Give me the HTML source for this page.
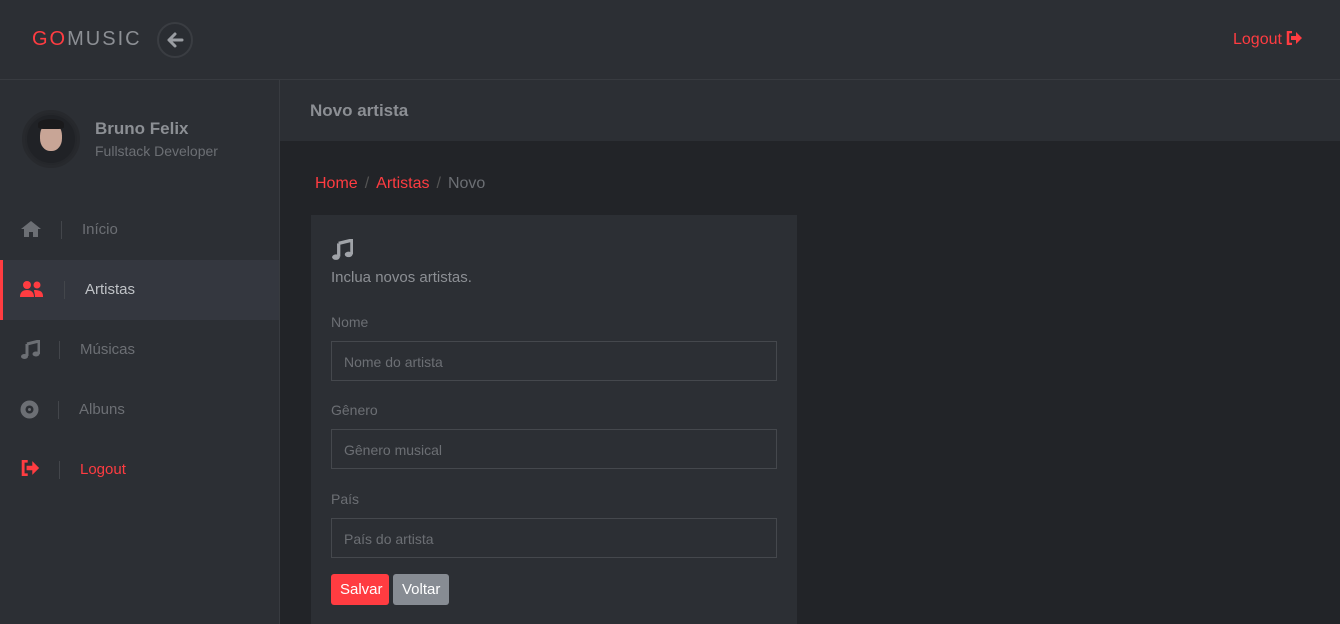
<!DOCTYPE html>
<html><head><meta charset="utf-8"><style>
*{box-sizing:border-box;margin:0;padding:0}
html,body{width:1340px;height:624px;overflow:hidden}
body{background:#222428;font-family:"Liberation Sans",sans-serif;position:relative}
.hdr{position:absolute;left:0;top:0;width:1340px;height:80px;background:#2c2f34;border-bottom:1px solid #383b40}
.logo{position:absolute;left:32px;top:28px;font-size:20px;letter-spacing:2px;color:#8c8f94}
.logo b{color:#ff3c41;font-weight:normal}
.back{position:absolute;left:157px;top:22px;width:36px;height:36px;border-radius:50%;border:2px solid #3a3d42;background:#2a2d32}
.hlog{position:absolute;left:1233px;top:31px;font-size:16px;color:#ff3c41}
.side{position:absolute;left:0;top:80px;width:280px;height:544px;background:#2c2f34;border-right:1px solid #383b40}
.av{position:absolute;left:22px;top:30px;width:58px;height:58px;border-radius:50%;background:#25272b;overflow:hidden;border:3px solid #27292d}
.av i{position:absolute;left:2px;top:2px;width:48px;height:48px;border-radius:50%;background:#202226;overflow:hidden}
.av i:before{content:"";position:absolute;left:13px;top:8px;width:22px;height:28px;border-radius:45%;background:#c8a596}
.av i:after{content:"";position:absolute;left:11px;top:4px;width:26px;height:10px;border-radius:50% 50% 20% 20%;background:#1a1a1c}
.nm{position:absolute;left:95px;top:39px;font-size:17px;font-weight:bold;color:#8c8f94}
.rl{position:absolute;left:95px;top:63px;font-size:14px;color:#6c6f74}
.it{position:absolute;left:0;width:279px;height:60px}
.it.act{background:#34373f;border-left:3px solid #ff3c41}
.it svg{position:absolute;left:20px;top:20px}
.it .sep{position:absolute;top:21px;width:1px;height:18px;background:#43464b}
.it span{position:absolute;top:21px;font-size:15px;color:#6c6f74}
.tbar{position:absolute;left:280px;top:80px;width:1060px;height:61px;background:#2c2f34}
.tbar span{position:absolute;left:30px;top:21px;font-size:17px;font-weight:bold;color:#8c8f94}
.bc{position:absolute;left:315px;top:175px;font-size:16px;color:#6c6f74}
.bc a{color:#ff3c41;text-decoration:none}
.bc i{font-style:normal;color:#555;margin:0 7px}
.card{position:absolute;left:311px;top:215px;width:486px;height:409px;background:#2c2f34}
.card .ds{position:absolute;left:20px;top:54px;font-size:15px;color:#8c8f94}
.lb{position:absolute;left:20px;font-size:14px;color:#6c6f74}
.in{position:absolute;left:20px;width:446px;height:40px;border:1px solid #45484d;font-size:14px;color:#6c6f74;padding:12px 12px}
.btn{position:absolute;top:359px;height:31px;border-radius:3px;color:#fff;font-size:15px;padding:7px 9px}
</style></head><body>
<div class="hdr">
<div class="logo"><b>GO</b>MUSIC</div>
<div class="back"><svg width="32" height="32" viewBox="0 0 32 32"><path d="M23 16H10M16 10l-6 6 6 6" stroke="#9a9da2" stroke-width="3" fill="none" stroke-linecap="round" stroke-linejoin="round"/></svg></div>
<div class="hlog">Logout <svg width="16" height="14" viewBox="0 0 16 14" style="vertical-align:-1px"><path d="M6 1H2v12h4" stroke="#ff3c41" stroke-width="2.5" fill="none"/><path d="M5 5h5V1l6 6-6 6V9H5z" fill="#ff3c41"/></svg></div>
</div>
<div class="side">
<div class="av"><i></i></div>
<div class="nm">Bruno Felix</div>
<div class="rl">Fullstack Developer</div>
<div class="it" style="top:120px"><svg width="22" height="18" viewBox="0 0 22 18"><path d="M11 1L1 9h3v8h5v-5h4v5h5V9h3z" fill="#6c6f74"/></svg><div class="sep" style="left:61px"></div><span style="left:82px">Início</span></div>
<div class="it act" style="top:180px"><svg width="24" height="18" viewBox="0 0 24 18" style="left:17px"><circle cx="7" cy="5" r="4" fill="#ff3c41"/><circle cx="17" cy="5" r="3.5" fill="#ff3c41"/><path d="M0 17c0-5 3-7 7-7s7 2 7 7z M14 10c5 0 9 1 9 6v1h-8c0-3-1-5-1-7z" fill="#ff3c41"/></svg><div class="sep" style="left:61px"></div><span style="left:82px;color:#bfc2c6">Artistas</span></div>
<div class="it" style="top:240px"><svg width="20" height="20" viewBox="0 0 20 20"><path d="M7 4l12-3v13" stroke="#6c6f74" stroke-width="3" fill="none"/><path d="M7 4v12" stroke="#6c6f74" stroke-width="3"/><ellipse cx="4.5" cy="16.5" rx="3.5" ry="2.5" fill="#6c6f74"/><ellipse cx="16" cy="14" rx="3.5" ry="2.5" fill="#6c6f74"/></svg><div class="sep" style="left:59px"></div><span style="left:80px">Músicas</span></div>
<div class="it" style="top:300px"><svg width="20" height="20" viewBox="0 0 20 20"><circle cx="9.5" cy="9.5" r="9" fill="#6c6f74"/><circle cx="9.5" cy="9.5" r="4" fill="#2c2f34"/><circle cx="9.5" cy="9.5" r="1.5" fill="#6c6f74"/></svg><div class="sep" style="left:58px"></div><span style="left:79px">Albuns</span></div>
<div class="it" style="top:360px"><svg width="20" height="16" viewBox="0 0 16 14"><path d="M6 1H2v12h4" stroke="#ff3c41" stroke-width="2.5" fill="none"/><path d="M5 5h5V1l6 6-6 6V9H5z" fill="#ff3c41"/></svg><div class="sep" style="left:59px"></div><span style="left:80px;color:#ff3c41">Logout</span></div>
</div>
<div class="tbar"><span>Novo artista</span></div>
<div class="bc"><a>Home</a><i>/</i><a>Artistas</a><i>/</i>Novo</div>
<div class="card">
<svg width="22" height="22" viewBox="0 0 20 20" style="position:absolute;left:20px;top:24px"><path d="M7 4l12-3v13" stroke="#a0a3a8" stroke-width="3" fill="none"/><path d="M7 4v12" stroke="#a0a3a8" stroke-width="3"/><ellipse cx="4.5" cy="16.5" rx="3.5" ry="2.5" fill="#a0a3a8"/><ellipse cx="16" cy="14" rx="3.5" ry="2.5" fill="#a0a3a8"/></svg>
<div class="ds">Inclua novos artistas.</div>
<div class="lb" style="top:99px">Nome</div>
<div class="in" style="top:126px">Nome do artista</div>
<div class="lb" style="top:187px">Gênero</div>
<div class="in" style="top:214px">Gênero musical</div>
<div class="lb" style="top:276px">País</div>
<div class="in" style="top:303px">País do artista</div>
<div class="btn" style="left:20px;width:58px;background:#ff3c41">Salvar</div>
<div class="btn" style="left:82px;width:56px;background:#878c93">Voltar</div>
</div>
</body></html>
